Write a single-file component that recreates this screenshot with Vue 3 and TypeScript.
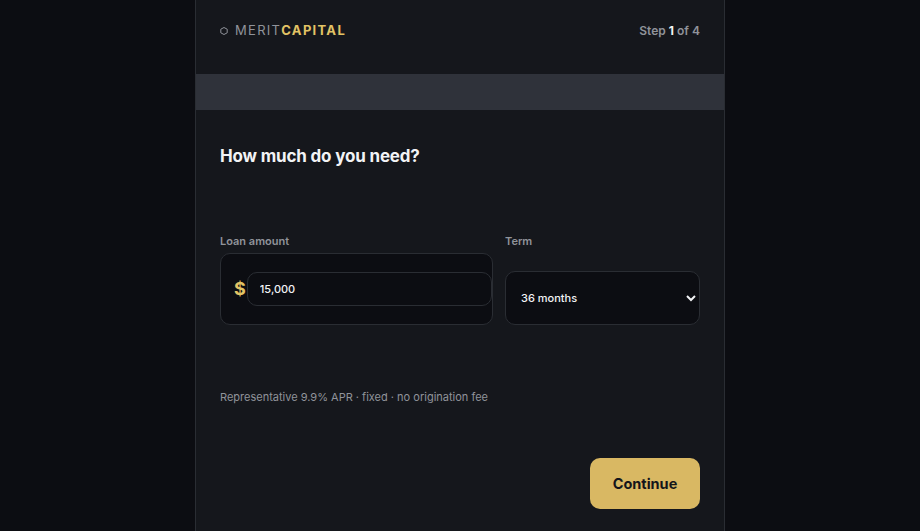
<script setup lang="ts">
const terms: string[] = ['12 months', '24 months', '36 months', '48 months']
</script>

<template>
  <div class="page">
    <main class="card">
      <header class="head">
        <div class="brand">
          <span class="mark">
            <svg width="8" height="8" viewBox="0 0 8 8" aria-hidden="true">
              <path d="M4 .5 7.2 2.2v3.6L4 7.5.8 5.8V2.2Z" fill="none" stroke="currentColor" stroke-width="1" />
            </svg>
          </span>
          <span class="merit">MERIT</span><span class="capital">CAPITAL</span>
        </div>
        <div class="step">Step <b>1</b> of 4</div>
      </header>
      <div class="bar"></div>
      <section class="body">
        <h1>How much do you need?</h1>
        <div class="fields">
          <div class="field">
            <label for="amt">Loan amount</label>
            <div class="amount">
              <span class="dollar">$</span>
              <input id="amt" class="input" value="15,000" />
            </div>
          </div>
          <div class="field">
            <label for="term">Term</label>
            <select id="term" class="select">
              <option v-for="t in terms" :key="t" :selected="t === '36 months'">{{ t }}</option>
            </select>
          </div>
        </div>
        <p class="note">Representative 9.9% APR · fixed · no origination fee</p>
        <div class="actions">
          <button class="cta" type="button">Continue</button>
        </div>
      </section>
    </main>
  </div>
</template>

<style>
html, body { margin: 0; background: #0c0d12; }
</style>

<style scoped>
.page {
  height: 531px;
  overflow: hidden;
  background: #0c0d12;
  font-family: Inter, "Liberation Sans", sans-serif;
  display: flex;
  justify-content: center;
}
.card {
  width: 530px;
  box-sizing: border-box;
  background: #15171c;
  border-left: 1px solid #2a2d33;
  border-right: 1px solid #2a2d33;
  height: 531px;
}
.head {
  height: 74px;
  box-sizing: border-box;
  padding: 0 24px 14px;
  display: flex;
  align-items: center;
  justify-content: space-between;
}
.brand { display: flex; align-items: center; font-size: 13px; letter-spacing: 1.3px; line-height: 18px; }
.mark { color: #90939a; width: 15px; display: flex; align-items: center; padding-top: 1px; }
.merit { color: #90939a; font-weight: 400; }
.capital { color: #e2c365; font-weight: 700; }
.step { color: #90939a; font-size: 12px; font-weight: 600; }
.step b { color: #f2f3f5; font-weight: 700; }
.bar { height: 36px; background: #2f323a; }
.body { padding: 0 24px; }
h1 {
  margin: 0;
  padding-top: 34px;
  height: 90px;
  box-sizing: content-box;
  font-size: 17px;
  line-height: 24px;
  font-weight: 700;
  letter-spacing: -0.17px;
  color: #f2f3f5;
}
.fields {
  display: grid;
  grid-template-columns: 1.4fr 1fr;
  gap: 12px;
}
.field { display: flex; flex-direction: column; min-width: 0; }
label { color: #90939a; font-size: 11px; font-weight: 600; line-height: 14px; margin-bottom: 5px; }
.amount {
  height: 72px;
  box-sizing: border-box;
  display: flex;
  align-items: center;
  gap: 1px;
  padding-left: 13px;
  background: #0c0d12;
  border: 1px solid #2a2d33;
  border-radius: 10px;
}
.dollar { color: #e2c365; font-size: 18px; font-weight: 700; line-height: 24px; }
.input {
  flex: none;
  width: 245px;
  height: 34px;
  box-sizing: border-box;
  padding: 0 12px;
  margin-bottom: 1px;
  background: #0c0d12;
  color: #f2f3f5;
  border: 1px solid #2a2d33;
  border-radius: 10px;
  font: 500 11px Inter, sans-serif;
  outline: none;
}
.select {
  margin-top: auto;
  height: 54px;
  width: 100%;
  box-sizing: border-box;
  padding: 0 4px 0 11px;
  background: #0c0d12;
  color: #f2f3f5;
  border: 1px solid #2a2d33;
  border-radius: 10px;
  font: 500 11px Inter, sans-serif;
}
.note { margin: 64px 0 0; color: #90939a; font-size: 11px; line-height: 16px; }
.actions { display: flex; justify-content: flex-end; margin-top: 52.5px; }
.cta {
  width: 110px;
  height: 51.5px;
  border: none;
  border-radius: 10px;
  background: #d9b863;
  color: #14151a;
  font: 700 14.5px Inter, sans-serif;
}
</style>
